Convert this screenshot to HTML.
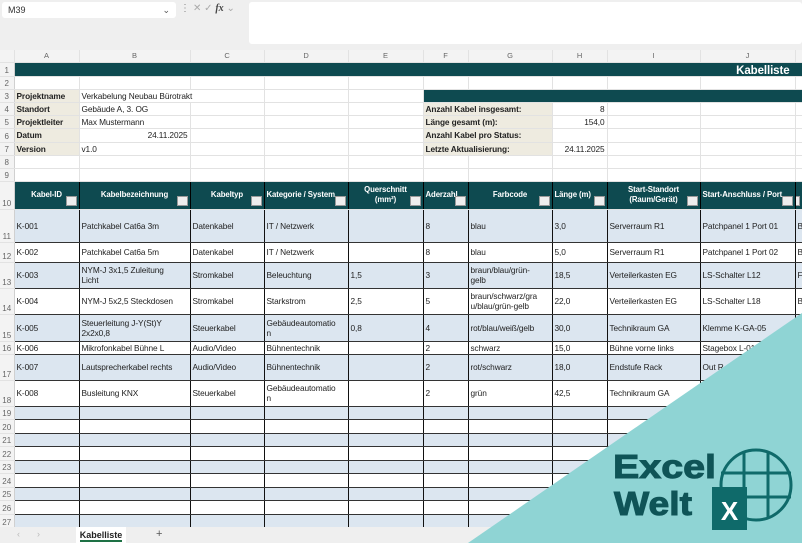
<!DOCTYPE html>
<html><head><meta charset="utf-8">
<style>
*{margin:0;padding:0;box-sizing:border-box}
body{width:802px;height:543px;overflow:hidden;background:#fff;font-family:"Liberation Sans",Arial,sans-serif;position:relative}
.top{position:absolute;left:0;top:0;width:802px;height:50px;background:#efefef}
.nb{position:absolute;left:2px;top:2px;width:174px;height:16px;background:#fff;border-radius:3px;font-size:9px;padding:3px 6px;color:#333}
.fb{position:absolute;left:249px;top:2px;width:553px;height:42px;background:#fff;border-radius:3px}
.ic{position:absolute;top:3px;font-size:10px;color:#aaa}
table{position:absolute;left:0;top:50px;width:802px;border-collapse:collapse;table-layout:fixed;font-size:8.3px;color:#222;letter-spacing:-0.1px}
td{overflow:hidden;white-space:nowrap;padding:0 2px;border-right:1px solid #e2e2e2;border-bottom:1px solid #e2e2e2;line-height:10px}
td.rn{color:#666;text-align:center;background:#f3f3f3;font-size:8px;vertical-align:bottom;padding:0;border-right:1px solid #d0d0d0;letter-spacing:0}
tr.ch td{background:#f3f3f3;color:#666;text-align:center;font-size:7.5px}
.teal{background:#0e4a50!important;color:#fff}
.lab{background:#eeebe0;font-weight:bold}
.r{text-align:right}
tr.th td:not(.rn){background:#0e4a50;color:#fff;font-weight:bold;text-align:center;border-right:1px solid #000;position:relative;font-size:7.8px;white-space:nowrap}
tr.th td:not(.rn)::after{content:"";position:absolute;right:2px;bottom:3px;width:9px;height:8px;background:#eee;border:1px solid #999}
tr.d td:not(.rn){border-right:1px solid #111;border-bottom:1px solid #333}
tr.bl td:not(.rn){background:#dce6f0}
.tabs{position:absolute;left:0;top:527px;width:802px;height:16px;background:#efefef;font-size:9px}
</style></head><body>
<div class="top">
<div class="nb">M39<span style="position:absolute;right:6px;color:#555">&#8964;</span></div>
<span class="ic" style="left:180px;color:#888">&#8942;</span>
<span class="ic" style="left:193px">✕ ✓ <i style="color:#444;font-family:'Liberation Serif';font-weight:bold">fx</i> &#8964;</span>
<div class="fb"></div>
</div>
<table>
<colgroup><col style="width:14px"><col style="width:65px"><col style="width:111px"><col style="width:74px"><col style="width:84px"><col style="width:75px"><col style="width:45px"><col style="width:84px"><col style="width:55px"><col style="width:93px"><col style="width:95px"><col style="width:7px"></colgroup>
<tr class="ch" style="height:12px"><td></td><td>A</td><td>B</td><td>C</td><td>D</td><td>E</td><td>F</td><td>G</td><td>H</td><td>I</td><td>J</td><td></td></tr>
<tr style="height:14px"><td class="rn">1</td><td class="teal" colspan="11" style="text-align:right;font-weight:bold;font-size:11.5px;padding-right:12px;vertical-align:bottom">Kabelliste</td></tr>
<tr style="height:13px"><td class="rn">2</td><td></td><td></td><td></td><td></td><td></td><td></td><td></td><td></td><td></td><td></td><td></td></tr>
<tr style="height:13px"><td class="rn">3</td><td class="lab">Projektname</td><td colspan="2">Verkabelung Neubau Bürotrakt</td><td></td><td></td><td class="teal" colspan="6"></td></tr>
<tr style="height:13px"><td class="rn">4</td><td class="lab">Standort</td><td>Gebäude A, 3. OG</td><td></td><td></td><td></td><td class="lab" colspan="2">Anzahl Kabel insgesamt:</td><td class="r">8</td><td></td><td></td><td></td></tr>
<tr style="height:13px"><td class="rn">5</td><td class="lab">Projektleiter</td><td>Max Mustermann</td><td></td><td></td><td></td><td class="lab" colspan="2">Länge gesamt (m):</td><td class="r">154,0</td><td></td><td></td><td></td></tr>
<tr style="height:14px"><td class="rn">6</td><td class="lab">Datum</td><td class="r">24.11.2025</td><td></td><td></td><td></td><td class="lab" colspan="2">Anzahl Kabel pro Status:</td><td></td><td></td><td></td><td></td></tr>
<tr style="height:13px"><td class="rn">7</td><td class="lab">Version</td><td>v1.0</td><td></td><td></td><td></td><td class="lab" colspan="2">Letzte Aktualisierung:</td><td class="r">24.11.2025</td><td></td><td></td><td></td></tr>
<tr style="height:13px"><td class="rn">8</td><td></td><td></td><td></td><td></td><td></td><td></td><td></td><td></td><td></td><td></td><td></td></tr>
<tr style="height:13px"><td class="rn">9</td><td></td><td></td><td></td><td></td><td></td><td></td><td></td><td></td><td></td><td></td><td></td></tr>
<tr class="th" style="height:28px"><td class="rn">10</td><td>Kabel-ID</td><td>Kabelbezeichnung</td><td>Kabeltyp</td><td style="text-align:left">Kategorie / System</td><td>Querschnitt<br>(mm²)</td><td style="text-align:left">Aderzahl</td><td>Farbcode</td><td style="text-align:left">Länge (m)</td><td>Start-Standort<br>(Raum/Gerät)</td><td style="text-align:left">Start-Anschluss / Port</td><td></td></tr>
<tr class="d bl" style="height:33px"><td class="rn">11</td><td>K-001</td><td>Patchkabel Cat6a 3m</td><td>Datenkabel</td><td>IT / Netzwerk</td><td></td><td>8</td><td>blau</td><td>3,0</td><td>Serverraum R1</td><td>Patchpanel 1 Port 01</td><td>B</td></tr>
<tr class="d" style="height:20px"><td class="rn">12</td><td>K-002</td><td>Patchkabel Cat6a 5m</td><td>Datenkabel</td><td>IT / Netzwerk</td><td></td><td>8</td><td>blau</td><td>5,0</td><td>Serverraum R1</td><td>Patchpanel 1 Port 02</td><td>B</td></tr>
<tr class="d bl" style="height:26px"><td class="rn">13</td><td>K-003</td><td>NYM-J 3x1,5 Zuleitung<br>Licht</td><td>Stromkabel</td><td>Beleuchtung</td><td>1,5</td><td>3</td><td>braun/blau/grün-<br>gelb</td><td>18,5</td><td>Verteilerkasten EG</td><td>LS-Schalter L12</td><td>F</td></tr>
<tr class="d" style="height:26px"><td class="rn">14</td><td>K-004</td><td>NYM-J 5x2,5 Steckdosen</td><td>Stromkabel</td><td>Starkstrom</td><td>2,5</td><td>5</td><td>braun/schwarz/gra<br>u/blau/grün-gelb</td><td>22,0</td><td>Verteilerkasten EG</td><td>LS-Schalter L18</td><td>B</td></tr>
<tr class="d bl" style="height:27px"><td class="rn">15</td><td>K-005</td><td>Steuerleitung J-Y(St)Y<br>2x2x0,8</td><td>Steuerkabel</td><td>Gebäudeautomatio<br>n</td><td>0,8</td><td>4</td><td>rot/blau/weiß/gelb</td><td>30,0</td><td>Technikraum GA</td><td>Klemme K-GA-05</td><td></td></tr>
<tr class="d" style="height:13px"><td class="rn">16</td><td>K-006</td><td>Mikrofonkabel Bühne L</td><td>Audio/Video</td><td>Bühnentechnik</td><td></td><td>2</td><td>schwarz</td><td>15,0</td><td>Bühne vorne links</td><td>Stagebox L-01</td><td></td></tr>
<tr class="d bl" style="height:26px"><td class="rn">17</td><td>K-007</td><td>Lautsprecherkabel rechts</td><td>Audio/Video</td><td>Bühnentechnik</td><td></td><td>2</td><td>rot/schwarz</td><td>18,0</td><td>Endstufe Rack</td><td>Out R</td><td></td></tr>
<tr class="d" style="height:26px"><td class="rn">18</td><td>K-008</td><td>Busleitung KNX</td><td>Steuerkabel</td><td>Gebäudeautomatio<br>n</td><td></td><td>2</td><td>grün</td><td>42,5</td><td>Technikraum GA</td><td></td><td></td></tr>
<tr class="d bl" style="height:13px"><td class="rn">19</td><td></td><td></td><td></td><td></td><td></td><td></td><td></td><td></td><td></td><td></td><td></td></tr>
<tr class="d" style="height:14px"><td class="rn">20</td><td></td><td></td><td></td><td></td><td></td><td></td><td></td><td></td><td></td><td></td><td></td></tr>
<tr class="d bl" style="height:13px"><td class="rn">21</td><td></td><td></td><td></td><td></td><td></td><td></td><td></td><td></td><td></td><td></td><td></td></tr>
<tr class="d" style="height:14px"><td class="rn">22</td><td></td><td></td><td></td><td></td><td></td><td></td><td></td><td></td><td></td><td></td><td></td></tr>
<tr class="d bl" style="height:13px"><td class="rn">23</td><td></td><td></td><td></td><td></td><td></td><td></td><td></td><td></td><td></td><td></td><td></td></tr>
<tr class="d" style="height:14px"><td class="rn">24</td><td></td><td></td><td></td><td></td><td></td><td></td><td></td><td></td><td></td><td></td><td></td></tr>
<tr class="d bl" style="height:13px"><td class="rn">25</td><td></td><td></td><td></td><td></td><td></td><td></td><td></td><td></td><td></td><td></td><td></td></tr>
<tr class="d" style="height:14px"><td class="rn">26</td><td></td><td></td><td></td><td></td><td></td><td></td><td></td><td></td><td></td><td></td><td></td></tr>
<tr class="d bl" style="height:14px"><td class="rn">27</td><td></td><td></td><td></td><td></td><td></td><td></td><td></td><td></td><td></td><td></td><td></td></tr>
</table>
<div class="tabs">
<span style="position:absolute;left:17px;top:2px;color:#bbb">&#8249;</span>
<span style="position:absolute;left:37px;top:2px;color:#bbb">&#8250;</span>
<div style="position:absolute;left:76px;top:0;width:50px;height:16px;background:#fff;font-weight:bold;text-align:center;padding-top:3px;color:#222">Kabelliste<div style="position:absolute;left:4px;right:4px;bottom:1px;height:2px;background:#1e7145"></div></div>
<span style="position:absolute;left:156px;top:1px;color:#555;font-size:11px">+</span>
</div>
<svg style="position:absolute;left:0;top:0" width="802" height="543">
<polygon points="802,313 802,543 468,543" fill="#8fd4d4"/>
<text x="613" y="478" font-family="Liberation Sans" font-weight="bold" font-size="33" fill="#0f5457" textLength="103" lengthAdjust="spacingAndGlyphs" stroke="#0f5457" stroke-width="1">Excel</text>
<text x="614" y="515" font-family="Liberation Sans" font-weight="bold" font-size="33" fill="#0f5457" textLength="78" lengthAdjust="spacingAndGlyphs" stroke="#0f5457" stroke-width="1">Welt</text>
<g fill="none" stroke="#0f6a6a" stroke-width="3">
<circle cx="756" cy="485" r="35"/>
<line x1="721" y1="473" x2="791" y2="473"/><line x1="721" y1="497" x2="791" y2="497"/>
<line x1="744" y1="451" x2="744" y2="519"/><line x1="768" y1="451" x2="768" y2="519"/>
</g>
<rect x="712" y="487" width="35" height="43" fill="#0f6a6a"/>
<text x="729.5" y="520" text-anchor="middle" font-family="Liberation Sans" font-weight="bold" font-size="26" fill="#fff">X</text>
</svg>
</body></html>
